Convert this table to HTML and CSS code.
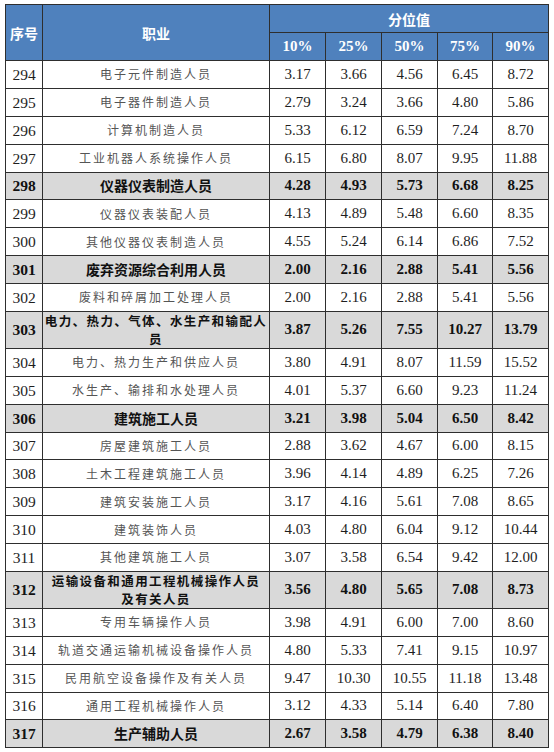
FILE: index.html
```html
<!DOCTYPE html>
<html lang="zh-CN">
<head>
<meta charset="utf-8">
<link rel="stylesheet" href="styles.css">
</head>
<body>
<table class="tbl">
<colgroup>
<col class="c-no"><col class="c-job"><col class="c-v"><col class="c-v"><col class="c-v"><col class="c-v4"><col class="c-v">
</colgroup>
<thead>
<tr class="h1"><th rowspan="2" class="zh">序号</th><th rowspan="2" class="zh">职业</th><th colspan="5" class="zh">分位值</th></tr>
<tr class="h2"><th>10%</th><th>25%</th><th>50%</th><th>75%</th><th>90%</th></tr>
</thead>
<tbody>
<tr><td class="no">294</td><td class="job">电子元件制造人员</td><td>3.17</td><td>3.66</td><td>4.56</td><td>6.45</td><td>8.72</td></tr>
<tr><td class="no">295</td><td class="job">电子器件制造人员</td><td>2.79</td><td>3.24</td><td>3.66</td><td>4.80</td><td>5.86</td></tr>
<tr><td class="no">296</td><td class="job">计算机制造人员</td><td>5.33</td><td>6.12</td><td>6.59</td><td>7.24</td><td>8.70</td></tr>
<tr><td class="no">297</td><td class="job">工业机器人系统操作人员</td><td>6.15</td><td>6.80</td><td>8.07</td><td>9.95</td><td>11.88</td></tr>
<tr class="cat"><td class="no">298</td><td class="job">仪器仪表制造人员</td><td>4.28</td><td>4.93</td><td>5.73</td><td>6.68</td><td>8.25</td></tr>
<tr><td class="no">299</td><td class="job">仪器仪表装配人员</td><td>4.13</td><td>4.89</td><td>5.48</td><td>6.60</td><td>8.35</td></tr>
<tr><td class="no">300</td><td class="job">其他仪器仪表制造人员</td><td>4.55</td><td>5.24</td><td>6.14</td><td>6.86</td><td>7.52</td></tr>
<tr class="cat"><td class="no">301</td><td class="job">废弃资源综合利用人员</td><td>2.00</td><td>2.16</td><td>2.88</td><td>5.41</td><td>5.56</td></tr>
<tr><td class="no">302</td><td class="job">废料和碎屑加工处理人员</td><td>2.00</td><td>2.16</td><td>2.88</td><td>5.41</td><td>5.56</td></tr>
<tr class="cat tall"><td class="no">303</td><td class="job">电力、热力、气体、水生产和输配人<br>员</td><td>3.87</td><td>5.26</td><td>7.55</td><td>10.27</td><td>13.79</td></tr>
<tr><td class="no">304</td><td class="job">电力、热力生产和供应人员</td><td>3.80</td><td>4.91</td><td>8.07</td><td>11.59</td><td>15.52</td></tr>
<tr><td class="no">305</td><td class="job">水生产、输排和水处理人员</td><td>4.01</td><td>5.37</td><td>6.60</td><td>9.23</td><td>11.24</td></tr>
<tr class="cat"><td class="no">306</td><td class="job">建筑施工人员</td><td>3.21</td><td>3.98</td><td>5.04</td><td>6.50</td><td>8.42</td></tr>
<tr><td class="no">307</td><td class="job">房屋建筑施工人员</td><td>2.88</td><td>3.62</td><td>4.67</td><td>6.00</td><td>8.15</td></tr>
<tr><td class="no">308</td><td class="job">土木工程建筑施工人员</td><td>3.96</td><td>4.14</td><td>4.89</td><td>6.25</td><td>7.26</td></tr>
<tr><td class="no">309</td><td class="job">建筑安装施工人员</td><td>3.17</td><td>4.16</td><td>5.61</td><td>7.08</td><td>8.65</td></tr>
<tr><td class="no">310</td><td class="job">建筑装饰人员</td><td>4.03</td><td>4.80</td><td>6.04</td><td>9.12</td><td>10.44</td></tr>
<tr><td class="no">311</td><td class="job">其他建筑施工人员</td><td>3.07</td><td>3.58</td><td>6.54</td><td>9.42</td><td>12.00</td></tr>
<tr class="cat tall"><td class="no">312</td><td class="job">运输设备和通用工程机械操作人员<br>及有关人员</td><td>3.56</td><td>4.80</td><td>5.65</td><td>7.08</td><td>8.73</td></tr>
<tr><td class="no">313</td><td class="job">专用车辆操作人员</td><td>3.98</td><td>4.91</td><td>6.00</td><td>7.00</td><td>8.60</td></tr>
<tr><td class="no">314</td><td class="job">轨道交通运输机械设备操作人员</td><td>4.80</td><td>5.33</td><td>7.41</td><td>9.15</td><td>10.97</td></tr>
<tr><td class="no">315</td><td class="job">民用航空设备操作及有关人员</td><td>9.47</td><td>10.30</td><td>10.55</td><td>11.18</td><td>13.48</td></tr>
<tr><td class="no">316</td><td class="job">通用工程机械操作人员</td><td>3.12</td><td>4.33</td><td>5.14</td><td>6.40</td><td>7.80</td></tr>
<tr class="cat"><td class="no">317</td><td class="job">生产辅助人员</td><td>2.67</td><td>3.58</td><td>4.79</td><td>6.38</td><td>8.40</td></tr>
</tbody>
</table>
</body>
</html>
```
FILE: styles.css
```css
html, body {
  margin: 0;
  padding: 0;
  background: #ffffff;
}
body {
  padding: 4px 0 0 5px;
}
.tbl {
  border-collapse: collapse;
  table-layout: fixed;
  width: 543px;
  font-family: "Liberation Serif", "Times New Roman", serif;
  font-size: 15px;
  color: #1e1e1e;
  border: 1.5px solid #3a3a3a;
}
.c-no { width: 37px; }
.c-job { width: 227px; }
.c-v { width: 56px; }
.c-v4 { width: 55px; }
.tbl th, .tbl td {
  border: 1px solid #2e2e2e;
  padding: 0;
  text-align: center;
  vertical-align: middle;
}
.tbl th {
  background: #4f81bd;
  color: #ffffff;
  font-weight: bold;
  height: 27px;
}
.tbl th.zh {
  font-family: "Noto Sans CJK SC", sans-serif;
  font-size: 14px;
}
.tbl td {
  height: 26.88px;
  line-height: 17px;
}
.tbl td.no {
  font-family: "Liberation Serif", "Times New Roman", serif;
  font-size: 15.5px;
}
.tbl tr.tall td {
  height: 36px;
}
.tbl td.job {
  font-family: "Noto Sans CJK SC", sans-serif;
  font-size: 12px;
  font-weight: 400;
  letter-spacing: 2px;
  color: #555555;
  line-height: 16px;
}
.tbl tr.cat td {
  background: #d9d9d9;
  font-weight: bold;
  color: #111111;
}
.tbl tr.cat td.job {
  font-size: 14px;
  letter-spacing: 0;
  font-weight: bold;
  color: #111111;
  line-height: 17px;
}
.tbl tr.tall td.job {
  font-size: 12.5px;
  letter-spacing: 1.4px;
  line-height: 18px;
}
```
